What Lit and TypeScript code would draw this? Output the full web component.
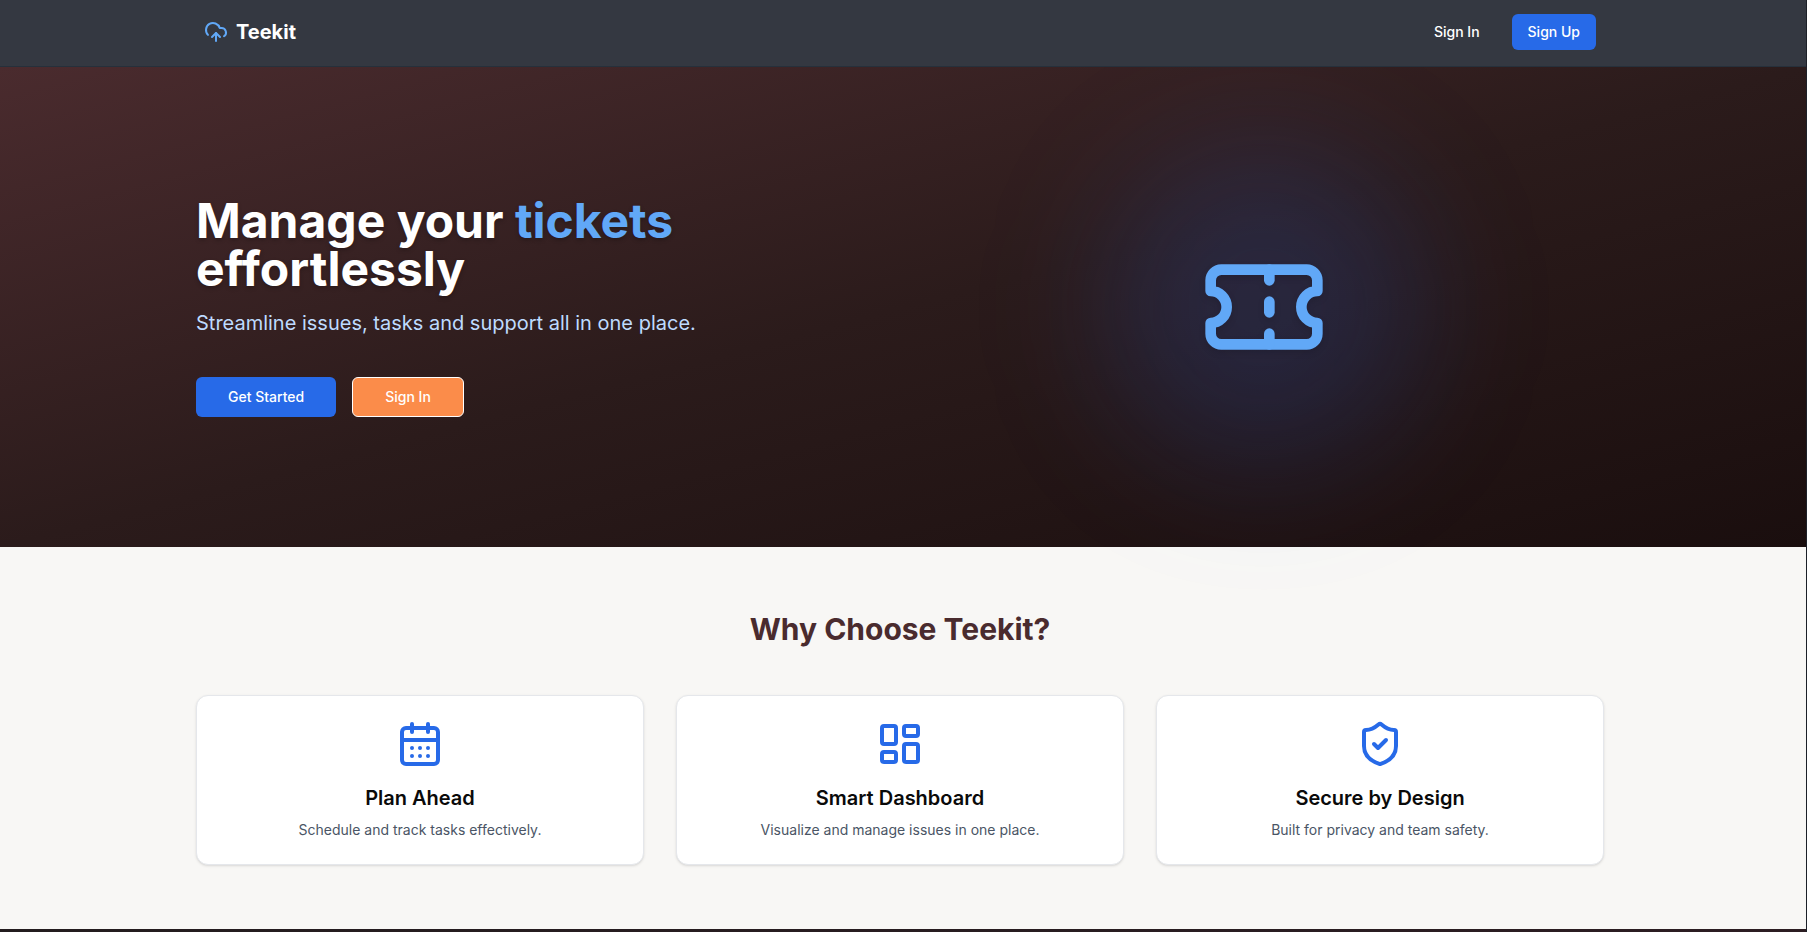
import { LitElement, html, css, svg } from "lit";
import { customElement, property } from "lit/decorators.js";

const cloudUpload = svg`
  <path d="M12 13v8"/>
  <path d="M4 14.899A7 7 0 1 1 15.71 8h1.79a4.5 4.5 0 0 1 2.5 8.242"/>
  <path d="m8 17 4-4 4 4"/>`;

const ticket = svg`
  <path d="M2 9a3 3 0 0 1 0 6v2a2 2 0 0 0 2 2h16a2 2 0 0 0 2-2v-2a3 3 0 0 1 0-6V7a2 2 0 0 0-2-2H4a2 2 0 0 0-2 2Z"/>
  <path d="M13 5v2"/>
  <path d="M13 17v2"/>
  <path d="M13 11v2"/>`;

const calendarDays = svg`
  <path d="M8 2v4"/>
  <path d="M16 2v4"/>
  <rect width="18" height="18" x="3" y="4" rx="2"/>
  <path d="M3 10h18"/>
  <path d="M8 14h.01"/>
  <path d="M12 14h.01"/>
  <path d="M16 14h.01"/>
  <path d="M8 18h.01"/>
  <path d="M12 18h.01"/>
  <path d="M16 18h.01"/>`;

const dashboard = svg`
  <rect width="7" height="9" x="3" y="3" rx="1"/>
  <rect width="7" height="5" x="14" y="3" rx="1"/>
  <rect width="7" height="9" x="14" y="12" rx="1"/>
  <rect width="7" height="5" x="3" y="16" rx="1"/>`;

const shieldCheck = svg`
  <path d="M20 13c0 5-3.5 7.5-7.66 8.95a1 1 0 0 1-.67-.01C7.5 20.5 4 18 4 13V6a1 1 0 0 1 1-1c2 0 4.5-1.2 6.24-2.72a1.17 1.17 0 0 1 1.52 0C14.51 3.81 17 5 19 5a1 1 0 0 1 1 1z"/>
  <path d="m9 12 2 2 4-4"/>`;

const icon = (shape: unknown) => html`
  <svg class="icon" viewBox="0 0 24 24" fill="none" stroke="currentColor" stroke-width="2"
    stroke-linecap="round" stroke-linejoin="round" aria-hidden="true">${shape}</svg>`;

const shared = css`
  *, *::before, *::after { box-sizing: border-box; }
  h1, h2, h3, p { margin: 0; }
  .icon { display: block; width: 100%; height: 100%; }
`;

@customElement("feature-card")
export class FeatureCard extends LitElement {
  @property({ attribute: false }) shape: unknown;
  @property() heading = "";
  @property() text = "";

  static styles = [shared, css`
    :host { display: block; }
    .card {
      display: flex;
      flex-direction: column;
      align-items: center;
      height: 100%;
      padding: 24px;
      text-align: center;
      background: #ffffff;
      border: 1px solid #e5e7eb;
      border-radius: 12px;
      box-shadow: 0 1px 3px rgba(0, 0, 0, 0.1), 0 1px 2px -1px rgba(0, 0, 0, 0.1);
    }
    .symbol { width: 48px; height: 48px; margin-bottom: 16px; color: #276ae8; }
    .title { margin-bottom: 8px; font-size: 20px; line-height: 28px; font-weight: 600; color: #0a0a0a; }
    .text { font-size: 14px; line-height: 20px; color: #4a5565; }
  `];

  render() {
    return html`
      <article class="card">
        <div class="symbol">${icon(this.shape)}</div>
        <h3 class="title">${this.heading}</h3>
        <p class="text">${this.text}</p>
      </article>`;
  }
}

@customElement("app-root")
export class AppRoot extends LitElement {
  static styles = [shared, css`
    :host {
      --gutter: 6px;
      display: block;
      font-family: Inter, "Liberation Sans", sans-serif;
      color: #0a0a0a;
    }
    .page {
      display: flex;
      flex-direction: column;
      min-height: 100vh;
      overflow: hidden;
      border-right: 1px solid #1c2028;
    }
    .container { width: 100%; max-width: 1408px; margin: 0 auto; }

    .header {
      position: relative;
      z-index: 2;
      padding-right: var(--gutter);
      background: #343841;
      border-bottom: 1px solid #26303b;
    }
    .bar {
      display: flex;
      align-items: center;
      justify-content: space-between;
      padding: 14px 8px 16px;
    }
    .brand {
      display: flex;
      align-items: center;
      gap: 8px;
      font-size: 20px;
      line-height: 28px;
      font-weight: 700;
      color: #ffffff;
      text-decoration: none;
    }
    .logo { width: 24px; height: 24px; color: #61a8f7; }
    .actions { display: flex; gap: 16px; }

    .button {
      height: 40px;
      padding: 0 32px;
      font: inherit;
      font-size: 14px;
      line-height: 20px;
      font-weight: 500;
      color: #ffffff;
      background: transparent;
      border: 0;
      border-radius: 6px;
      cursor: pointer;
    }
    .small { height: 36px; padding: 0 16px; }
    .primary { background: #276ae8; }
    .accent { background: #fb8c4a; border: 1px solid #ffffff; }

    .hero {
      padding-right: var(--gutter);
      background: linear-gradient(to bottom right, #4a2b2e, #2b1b1b, #1a0e0e);
    }
    .columns {
      display: grid;
      grid-template-columns: 1fr 1fr;
      align-items: center;
      gap: 48px;
      min-height: 480px;
    }
    .headline {
      margin-bottom: 16px;
      font-size: 48px;
      line-height: 48px;
      font-weight: 700;
      color: #ffffff;
      text-shadow: 0 2px 4px rgba(0, 0, 0, 0.25);
    }
    .highlight { color: #61a8f7; }
    .lead { margin-bottom: 40px; font-size: 20px; line-height: 28px; color: #bedbff; }
    .choices { display: flex; gap: 16px; }
    .art { position: relative; display: flex; justify-content: center; }
    .glow {
      position: absolute;
      top: 50%;
      left: 50%;
      width: 320px;
      height: 320px;
      margin: -160px 0 0 -160px;
      border-radius: 50%;
      background: rgba(43, 108, 246, 0.17);
      filter: blur(64px);
      pointer-events: none;
    }
    .ticket {
      position: relative;
      width: 128px;
      height: 128px;
      color: #61a8f7;
      filter: drop-shadow(0 3px 3px rgba(0, 0, 0, 0.12));
    }

    .features { padding: 64px var(--gutter) 64px 0; background: #f8f7f5; }
    .question {
      margin-bottom: 48px;
      font-size: 30px;
      line-height: 36px;
      font-weight: 700;
      text-align: center;
      color: #4a2b2e;
    }
    .cards { display: grid; grid-template-columns: repeat(3, 1fr); gap: 32px; }

    .footer { flex: 1; background: linear-gradient(to right, #231c1e, #2c1d22); }

    @media (max-width: 1439px) {
      .container { padding-left: 24px; padding-right: 24px; }
    }
    @media (max-width: 767px) {
      .columns, .cards { grid-template-columns: 1fr; }
    }
  `];

  private features = [
    { shape: calendarDays, heading: "Plan Ahead", text: "Schedule and track tasks effectively." },
    { shape: dashboard, heading: "Smart Dashboard", text: "Visualize and manage issues in one place." },
    { shape: shieldCheck, heading: "Secure by Design", text: "Built for privacy and team safety." },
  ];

  render() {
    return html`
      <div class="page">
        <header class="header">
          <nav class="container bar">
            <a class="brand" href="#"><span class="logo">${icon(cloudUpload)}</span>Teekit</a>
            <div class="actions">
              <button class="button small" type="button">Sign In</button>
              <button class="button small primary" type="button">Sign Up</button>
            </div>
          </nav>
        </header>
        <section class="hero">
          <div class="container columns">
            <div>
              <h1 class="headline">Manage your <span class="highlight">tickets</span><br>effortlessly</h1>
              <p class="lead">Streamline issues, tasks and support all in one place.</p>
              <div class="choices">
                <button class="button primary" type="button">Get Started</button>
                <button class="button accent" type="button">Sign In</button>
              </div>
            </div>
            <div class="art">
              <div class="glow"></div>
              <div class="ticket">${icon(ticket)}</div>
            </div>
          </div>
        </section>
        <section class="features">
          <div class="container">
            <h2 class="question">Why Choose Teekit?</h2>
            <div class="cards">
              ${this.features.map((f) => html`
                <feature-card .shape=${f.shape} .heading=${f.heading} .text=${f.text}></feature-card>`)}
            </div>
          </div>
        </section>
        <footer class="footer"></footer>
      </div>`;
  }
}
